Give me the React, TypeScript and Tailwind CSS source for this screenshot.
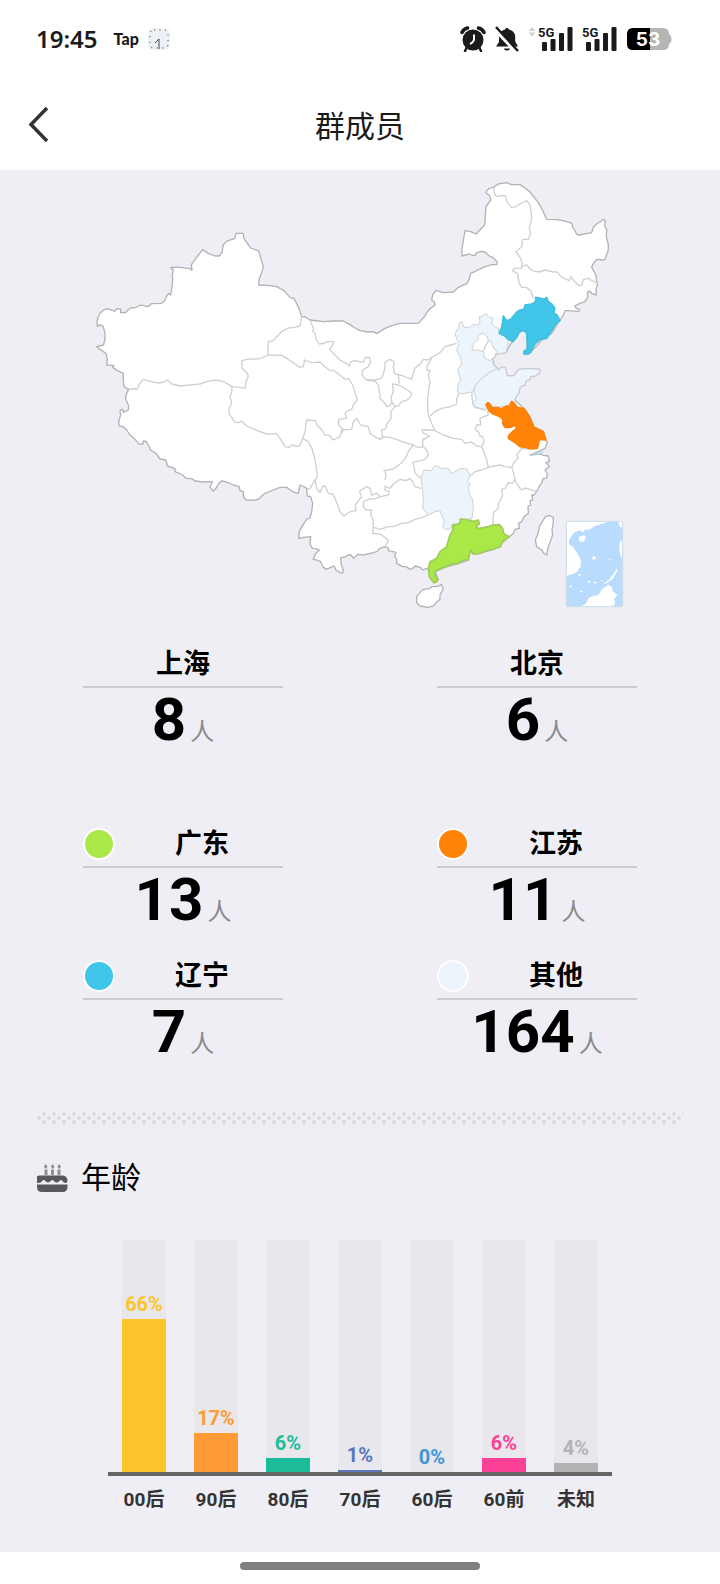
import { ReactNode } from "react";

interface IRegion {
  name: string;
  count: number;
  dot?: string;
}

interface IAge {
  label: string;
  percent: number;
  bar: string;
  text: string;
}

const cities: IRegion[] = [
  { name: "上海", count: 8 },
  { name: "北京", count: 6 },
];

const provinces: IRegion[] = [
  { name: "广东", count: 13, dot: "bg-[#a9e847]" },
  { name: "江苏", count: 11, dot: "bg-[#ff8307]" },
  { name: "辽宁", count: 7, dot: "bg-[#41c5e9]" },
  { name: "其他", count: 164, dot: "bg-[#ebf5fb]" },
];

const ages: IAge[] = [
  { label: "00后", percent: 66, bar: "bg-[#fdc52c]", text: "text-[#fdc52c]" },
  { label: "90后", percent: 17, bar: "bg-[#fe9b35]", text: "text-[#fe9b35]" },
  { label: "80后", percent: 6, bar: "bg-[#1cbc9a]", text: "text-[#1cbc9a]" },
  { label: "70后", percent: 1, bar: "bg-[#5978bb]", text: "text-[#5978bb]" },
  { label: "60后", percent: 0, bar: "bg-[#3f96dc]", text: "text-[#3f96dc]" },
  { label: "60前", percent: 6, bar: "bg-[#fa4197]", text: "text-[#fa4197]" },
  { label: "未知", percent: 4, bar: "bg-[#b3b3b6]", text: "text-[#b3b3b6]" },
];

const mainland =
  "52,470 51,458 53,445 60,430 70,421 80,416 95,420 104,424 110,416 122,417 122,428 136,428 144,420 152,414 170,412 178,406 190,406 200,410 207,408 214,401 244,400 254,392 260,378 266,370 272,375 276,350 278,330 277,314 280,300 272,292 300,292 330,296 336,301 334,284 350,262 368,239 385,250 405,258 418,258 426,248 430,224 440,214 450,210 464,206 468,190 490,190 492,206 502,220 512,234 536,243 544,270 550,290 545,308 538,325 536,345 570,347 590,350 612,362 630,382 642,386 656,412 665,440 676,441 690,450 730,455 760,453 790,453 810,464 825,474 840,482 862,486 880,485 890,491 915,475 935,467 960,460 1015,460 1035,438 1040,428 1050,416 1065,405 1063,396 1055,390 1058,375 1068,361 1090,368 1120,366 1135,352 1162,340 1168,325 1172,310 1190,302 1215,290 1235,284 1250,284 1252,276 1238,262 1228,258 1215,246 1205,244 1190,248 1185,256 1178,256 1168,252 1146,258 1146,235 1152,200 1155,182 1170,184 1188,192 1214,165 1216,135 1218,110 1232,90 1230,78 1218,68 1220,62 1228,55 1240,52 1255,42 1280,38 1295,44 1320,44 1335,54 1350,66 1375,98 1390,125 1400,148 1430,149 1450,152 1476,160 1478,172 1485,182 1490,193 1496,195 1535,188 1540,172 1550,162 1568,150 1572,148 1576,155 1574,168 1580,178 1579,200 1585,225 1585,240 1575,268 1565,270 1552,268 1540,280 1535,292 1548,315 1549,328 1552,345 1548,358 1549,375 1535,370 1528,363 1522,368 1524,380 1515,395 1500,400 1484,408 1490,416 1498,418 1496,425 1470,422 1455,422 1448,440 1438,452 1415,490 1385,510 1350,550 1332,552 1342,530 1340,490 1332,482 1318,486 1298,515 1290,525 1278,548 1250,552 1238,568 1242,585 1252,595 1256,602 1264,592 1275,592 1278,600 1282,618 1302,618 1310,605 1320,598 1345,596 1380,598 1378,610 1360,620 1352,618 1350,628 1338,632 1335,645 1324,648 1318,658 1317,670 1308,678 1305,690 1332,716 1350,740 1362,772 1390,785 1398,810 1402,818 1395,835 1375,845 1350,855 1380,852 1390,856 1405,858 1408,875 1398,878 1408,890 1395,900 1402,912 1400,925 1390,925 1385,940 1378,948 1370,965 1362,975 1355,975 1358,990 1350,992 1352,1005 1344,1008 1345,1030 1332,1040 1325,1055 1316,1060 1318,1075 1305,1078 1300,1090 1288,1100 1265,1120 1240,1138 1200,1150 1180,1152 1170,1142 1165,1170 1130,1182 1100,1190 1065,1205 1075,1230 1062,1238 1048,1220 1045,1195 1038,1196 1030,1200 1020,1192 1005,1188 998,1196 990,1198 978,1190 968,1190 950,1180 950,1168 944,1158 948,1147 925,1142 925,1134 915,1130 900,1135 890,1145 880,1148 850,1155 835,1153 820,1165 812,1154 805,1155 795,1161 782,1163 784,1185 790,1200 788,1209 780,1208 768,1200 762,1188 752,1192 740,1198 730,1192 722,1175 710,1170 700,1168 706,1152 718,1140 708,1136 697,1135 690,1122 692,1100 670,1102 656,1106 658,1085 668,1066 680,1048 690,1044 695,1025 698,1000 692,980 682,978 680,955 668,948 660,945 655,970 640,966 620,952 600,952 580,960 555,970 545,978 535,988 520,991 498,990 490,980 490,965 480,962 478,950 460,945 440,936 425,933 415,942 408,955 400,963 390,952 397,935 370,936 345,933 335,926 318,925 308,915 285,905 285,896 262,888 258,870 240,867 228,850 212,840 205,825 198,814 190,813 188,822 178,823 165,808 150,795 140,780 130,770 118,768 116,755 122,735 120,722 128,718 130,727 145,720 146,708 136,685 140,670 146,658 132,650 130,632 130,610 112,602 98,592 102,586 80,585 82,568 78,550 60,538 50,530 70,525 75,510 75,490 70,470 60,464";

const borders = [
  "146,657 172,657 178,642 190,628 200,632 235,639 252,636 262,630 275,642 300,648 330,645 360,642 380,635 405,630 425,633 440,640 456,650 480,652 495,655 498,636 505,618 500,608 486,595 486,572 500,568 540,566 565,555 564,530 565,515 580,512 590,500 605,485 625,474 645,472 660,468 665,440",
  "456,650 455,668 450,682 455,698 446,720 448,732 465,757 475,758 485,753 500,768 530,781 560,792 590,791 600,805 615,830 628,832 635,824 650,830 660,826 668,805 675,785 680,750 706,752 712,768 722,775 735,795 748,796 760,810 780,800 785,780 815,778 820,755 830,745 842,765 865,770 870,790 888,802 900,808 912,800 932,803 950,808 965,815 1000,825 1015,833 1030,830 1040,840 1045,855 1035,868 998,877 1002,890 1005,910 1023,925",
  "668,805 685,815 697,838 700,850 705,870 710,900 712,920 705,930 690,955 683,958",
  "565,555 605,556 625,568 645,582 660,592 670,590 674,570 695,578 720,576 735,590 752,603 760,600 778,614 795,628 806,626 818,645 824,665 832,688 820,705 815,718 800,724 795,732 800,745 776,748 776,765 790,780 785,790",
  "690,450 696,465 700,475 699,485 705,490 708,506 718,522 730,520 738,516 762,514 758,525 748,538 770,560 782,572 800,580 808,590 812,575 825,572 850,577 856,562 868,562 872,575 865,590 848,600 846,612 852,624 865,632 885,633 895,645 900,675 900,685 915,700 920,710 932,705 935,695 945,710 955,708 965,695 978,692 992,680 995,670 975,655 955,645 937,642 940,665 934,680 935,695",
  "860,630 885,630 905,625 912,605 915,590 915,578 922,572 930,568 943,576 940,592 943,610 970,618 995,628 1000,610 1005,595 1020,582 1030,568 1045,570 1055,562 1068,555 1080,548 1095,530 1112,525 1130,520",
  "955,615 958,640",
  "1055,562 1050,575 1040,590 1040,600 1050,602 1045,615 1050,635 1046,660 1043,690 1043,715 1045,735 1055,760 1065,782 1050,780 1026,780 1028,788 1048,798 1040,804 1028,808 1028,830",
  "1050,738 1065,725 1085,715 1112,710 1130,702 1130,688 1136,670",
  "945,710 932,725 934,740 930,750 922,758 918,775 905,780 908,800 900,808",
  "1065,782 1090,795 1120,805 1145,808 1155,820 1175,816 1190,828 1205,830 1212,815 1208,800 1200,798 1195,785 1185,780 1190,765 1202,765 1200,745 1215,738 1225,735 1222,722",
  "1205,830 1215,855 1220,870 1225,892 1245,888 1260,885 1275,890 1295,892 1300,880 1315,865 1310,855 1325,835 1350,837",
  "1170,918 1185,905 1205,900 1225,892",
  "1295,892 1300,905 1305,930 1298,940 1285,938 1275,955 1265,958 1268,975 1262,990 1255,1000 1255,1015 1243,1025 1240,1035 1238,1065",
  "1305,930 1320,955 1328,960 1335,954 1350,958 1370,965",
  "1000,825 985,845 978,862 965,878 940,897 912,902 918,912 915,930",
  "1023,955 1005,950 998,935 990,925 978,932 970,930 960,928 940,942 930,955 915,948 915,960 928,965 925,975 900,980 890,985 865,988 850,995 850,1010 858,1020 875,1020 872,1035 880,1050 880,1070 878,1090 900,1092 918,1105 925,1112 920,1122 915,1130",
  "880,1072 900,1078 925,1070 940,1070 965,1060 985,1058 1005,1048 1028,1042 1045,1035",
  "705,930 710,955 720,968 728,950 735,948 745,970 758,972 765,985 775,1010 780,1025 792,1038 810,1025 828,1022 826,1005 845,980 838,965 860,950 870,955 875,975 890,970 900,980",
  "1175,668 1178,700 1185,712 1218,720",
  "1360,385 1352,362 1338,352 1325,352 1318,340 1315,325 1312,310 1298,302 1302,295 1325,295 1326,280 1322,265 1308,245 1325,230 1328,208 1345,208 1352,190 1348,175 1352,160 1355,140 1350,105 1340,92 1320,102 1308,110 1295,112 1280,95 1277,78 1265,76 1250,80 1243,72 1242,52",
  "1325,290 1340,284 1348,295 1358,302 1378,306 1395,300 1420,306 1432,306 1445,322 1468,332 1472,320 1480,330 1495,346 1505,346 1510,328 1525,325 1535,332 1552,338",
];

const hebei =
  "1130,508 1125,490 1135,475 1138,460 1145,453 1152,472 1168,472 1180,463 1195,466 1200,455 1198,440 1208,438 1218,430 1225,440 1240,445 1235,462 1245,470 1255,475 1258,492 1275,500 1286,515 1278,548 1250,552 1238,568 1240,585 1252,595 1225,610 1200,630 1185,648 1180,665 1145,672 1132,665 1135,640 1143,630 1133,600 1145,580 1140,560 1130,540 1138,520";
const beijing =
  "1175,540 1182,518 1195,508 1195,494 1210,490 1222,500 1225,512 1215,530 1210,545 1195,540";
const tianjin =
  "1225,515 1232,512 1238,530 1250,545 1244,560 1230,572 1213,562 1210,545 1216,530";
const shandong =
  "1252,595 1256,602 1264,592 1275,592 1278,600 1282,618 1302,618 1310,605 1320,598 1345,596 1380,598 1378,610 1360,620 1352,618 1350,628 1338,632 1335,645 1324,648 1318,658 1317,670 1308,678 1303,694 1280,708 1240,712 1223,702 1218,720 1185,712 1178,700 1190,685 1182,670 1185,648 1200,630 1225,610";
const liaoning =
  "1258,490 1266,468 1270,438 1280,452 1292,448 1312,425 1320,420 1332,418 1335,405 1355,402 1367,395 1367,382 1385,386 1393,388 1400,382 1404,394 1415,402 1424,414 1422,430 1432,436 1440,452 1425,465 1416,480 1400,505 1380,508 1365,522 1352,545 1345,552 1332,552 1332,544 1342,538 1342,515 1340,490 1332,480 1318,486 1310,502 1298,515 1285,508 1275,498";
const jiangsu =
  "1218,704 1224,698 1232,704 1235,713 1250,713 1265,716 1280,708 1288,708 1295,694 1303,700 1312,712 1332,716 1342,730 1350,745 1362,772 1375,778 1390,785 1398,810 1378,808 1372,835 1350,837 1338,832 1320,830 1308,820 1285,805 1287,795 1298,785 1310,775 1306,766 1292,772 1275,772 1268,760 1270,750 1260,740 1240,732 1228,724";
const hunan =
  "1023,925 1028,908 1032,900 1055,902 1062,890 1070,888 1085,895 1105,895 1115,910 1125,905 1140,895 1160,897 1170,918 1162,935 1170,942 1165,955 1170,975 1178,990 1180,1020 1175,1047 1150,1048 1135,1062 1118,1062 1110,1078 1095,1078 1088,1070 1093,1055 1080,1022 1065,1025 1045,1035 1028,1015 1030,980";
const guangdong =
  "1238,1065 1258,1064 1268,1075 1272,1092 1288,1100 1275,1108 1265,1120 1262,1130 1240,1138 1225,1140 1200,1150 1180,1152 1172,1140 1168,1155 1165,1170 1150,1170 1130,1182 1115,1182 1100,1190 1080,1196 1065,1205 1066,1218 1073,1228 1070,1236 1062,1238 1055,1230 1048,1220 1045,1195 1050,1175 1070,1165 1080,1145 1100,1130 1108,1100 1118,1080 1118,1066 1135,1062 1142,1055 1140,1048 1150,1047 1165,1050 1180,1054 1195,1050 1198,1062 1188,1070 1195,1076 1225,1070";
const hainan =
  "1010,1280 1025,1262 1030,1258 1048,1256 1055,1250 1070,1250 1085,1244 1089,1258 1080,1275 1080,1288 1068,1298 1062,1307 1045,1312 1020,1308 1010,1298";
const taiwan =
  "1408,1036 1420,1042 1420,1058 1416,1080 1418,1095 1405,1130 1400,1155 1392,1150 1385,1140 1370,1130 1366,1110 1374,1092 1378,1070 1390,1050 1396,1040";

const ChinaMap = () => {
  return (
    <svg
      viewBox="0 0 1680 1350"
      className="mx-auto block w-7/9"
      role="img"
      aria-label="群成员地区分布"
      strokeLinejoin="round"
    >
      <g fill="#fff" stroke="#b3b3b5" strokeWidth="4">
        <polygon points={mainland} />
        <polygon points={hainan} />
        <polygon points={taiwan} />
      </g>
      <g fill="#ebf5fb" stroke="#cfd1d3" strokeWidth="3">
        <polygon points={hebei} />
        <polygon points={shandong} />
        <polygon points={hunan} />
      </g>
      <g fill="none" stroke="#d0d0d1" strokeWidth="4">
        {borders.map((points) => (
          <polyline key={points} points={points} />
        ))}
      </g>
      <g fill="#fff" stroke="#d0d0d1" strokeWidth="3">
        <polygon points={beijing} />
        <polygon points={tianjin} />
      </g>
      <polygon points={liaoning} fill="#41c5e9" stroke="#41bfe1" strokeWidth="5" />
      <polygon points={jiangsu} fill="#ff8307" stroke="#fb8007" strokeWidth="5" />
      <polygon points={guangdong} fill="#a9e847" stroke="#9fcb5b" strokeWidth="5" />
      <path d="M1350 855l20-7 25-4-12 8z" fill="#b5dcea" />
      <rect x="1459" y="1054" width="169" height="256" fill="#b9dcfe" />
      <g fill="#fff">
        <path d="M1459 1054H1590L1545 1068 1530 1078 1514 1080 1508 1088 1500 1080 1482 1088 1468 1108 1466 1122 1478 1130 1492 1150 1503 1172 1502 1190 1490 1206 1480 1212 1459 1218Z" />
        <path d="M1498 1100l14-4 6 6-6 12-10 2-6-8zM1614 1054h14v20l-8-4zM1618 1120l10-12v60l-6-10-4-18z" />
        <path d="M1500 1310l16-8 10-18 16-6 14-4 10-16 20-14 10 8 2 12 14 10-10 14 4 14-12 8zM1572 1240l18-14 20-30 3 5-15 26-22 14z" />
        <path d="M1534 1164l10-6 5 6-9 5zM1522 1234l8-2 2 4-8 2zM1542 1236l8 0 0 4-8 0zM1495 1212l7 0 0 5-7 0zM1468 1248l7-2 0 6-7 0zM1500 1262l8 0 0 4-8 0zM1585 1170l7-3 2 4zM1560 1232l6-3 2 5z" />
      </g>
      <rect x="1459" y="1054" width="169" height="256" fill="none" stroke="#cbdbe8" strokeWidth="3" />
    </svg>
  );
};

const Signal = () => {
  return (
    <svg viewBox="0 0 36 26" className="h-[26px] w-9" fill="#1b1b1b">
      <text x="0" y="11" fontSize="13" fontWeight="700" fontFamily="Roboto">
        5G
      </text>
      <rect x="4" y="16" width="5" height="9" rx="1" />
      <rect x="12.5" y="13" width="5" height="12" rx="1" />
      <rect x="21" y="7" width="5" height="18" rx="1" />
      <rect x="29.5" y="1" width="5" height="24" rx="1" />
    </svg>
  );
};

const StatusBar = () => {
  return (
    <div className="flex h-[78px] items-center justify-between pr-12 pl-9 text-[#1b1b1b]">
      <div className="flex items-center">
        <span className="font-['Noto_Sans',sans-serif] text-2xl font-semibold">19:45</span>
        <span className="ml-4 font-[Lato,sans-serif] text-base font-black">Tap</span>
        <svg viewBox="0 0 24 24" className="ml-2 size-6">
          <rect x="1" y="1" width="22" height="22" rx="6" fill="#edf1f5" />
          <rect
            x="3"
            y="3"
            width="18"
            height="18"
            rx="4"
            fill="none"
            stroke="#777"
            strokeWidth="1.5"
            strokeDasharray="1 4.5"
          />
          <path d="M12 12v10M12 12l-4 4" stroke="#444" strokeWidth="1" />
        </svg>
      </div>
      <div className="flex items-center">
        <svg viewBox="0 0 26 26" className="size-[26px]">
          <path
            d="M2 6.5Q3.500 3 7.500 2M24 6.500Q22.500 3 18.500 2"
            stroke="#1b1b1b"
            strokeWidth="3.5"
            strokeLinecap="round"
            fill="none"
          />
          <path d="M7 21l-2 4M19 21l2 4" stroke="#1b1b1b" strokeWidth="2.5" strokeLinecap="round" />
          <circle cx="13" cy="14" r="10.5" fill="#1b1b1b" />
          <path d="M14 8.500v5.500q-1 2.500-4 4" stroke="#fff" strokeWidth="2" fill="none" />
        </svg>
        <svg viewBox="0 0 26 26" className="ml-2 size-[26px]">
          <path
            d="M13 2c1 0 1.800.6 2 1.500 4 1 6.200 3.600 6.200 7.500v4.500l2.800 5H2l3-4.500v-5C5 6.900 7.500 4.500 11 3.500c.2-.9 1-1.500 2-1.500zM10 22.500h6c-.4 1.500-1.500 2-3 2s-2.600-.5-3-2z"
            fill="#1b1b1b"
          />
          <path d="M0 2l24 25.500" stroke="#fff" strokeWidth="4" />
          <path d="M2 1L24 25" stroke="#1b1b1b" strokeWidth="2.500" />
        </svg>
        <svg viewBox="0 0 8 26" className="ml-2 h-[26px] w-2" fill="#d0d0d0">
          <path d="M4 1l3.500 4h-7zM4 10.500L.5 6.500h7z" />
        </svg>
        <div className="ml-0.5 flex gap-2">
          <Signal />
          <Signal />
        </div>
        <svg viewBox="0 0 46 24" className="ml-2 h-6 w-[46px]">
          <path d="M24 1h13q6 0 6 6 2.500 1 2.500 5T43 17q0 6-6 6H24z" fill="#b5b5b5" />
          <path d="M24 1H7Q1 1 1 7v10q0 6 6 6h17z" fill="#000" />
          <text
            x="22"
            y="19"
            fontSize="19"
            fontWeight="700"
            fontFamily="Inter"
            textAnchor="middle"
            fill="#fff"
          >
            53
          </text>
        </svg>
      </div>
    </div>
  );
};

const Header = () => {
  return (
    <header className="grid h-[92px] grid-cols-[1fr_auto_1fr] items-center pt-1 pb-1">
      <button type="button" aria-label="返回" className="ml-6 w-8">
        <svg viewBox="0 0 32 40" className="h-10 w-8" fill="none">
          <path d="M23 4L7 20.500 23 37" stroke="#333" strokeWidth="3.500" />
        </svg>
      </button>
      <h1 className="pt-1.5 text-[30px] leading-10 text-[#1a1a1a]">群成员</h1>
    </header>
  );
};

const RegionStat = ({ region }: { region: IRegion }) => {
  return (
    <div>
      <div className="flex h-[42px] items-center border-b-2 border-[#cdccd2] pb-1">
        {region.dot && (
          <span className={`mr-1.5 size-8 rounded-full border-2 border-white ${region.dot}`} />
        )}
        <h2 className="flex-1 text-center text-[27px] leading-9 font-bold">{region.name}</h2>
      </div>
      <p className="mt-0.5 flex items-baseline justify-center gap-1 leading-[60px]">
        <span className="text-[60px] font-bold">{region.count}</span>
        <span className="text-2xl leading-6 text-[#8a898e]">人</span>
      </p>
    </div>
  );
};

const StatGrid = ({ children }: { children: ReactNode }) => {
  return <div className="grid grid-cols-2 gap-x-[154px] gap-y-7 px-[83px]">{children}</div>;
};

const Divider = () => {
  return (
    <svg className="block h-3 w-full" aria-hidden="true">
      <pattern id="dots" width="10" height="12" patternUnits="userSpaceOnUse">
        <g fill="#dad9dd">
          <circle cx="7" cy="2" r="1.9" />
          <circle cx="2" cy="6" r="1.9" />
          <circle cx="7" cy="10" r="1.9" />
        </g>
      </pattern>
      <rect width="100%" height="12" fill="url(#dots)" />
    </svg>
  );
};

const CakeIcon = () => {
  return (
    <svg viewBox="0 0 32 28" className="h-7 w-8" fill="#58585a">
      <g fill="#8f8f91">
        <path d="M8.500 0l2 2.500-1 2H8L7 2.500zM15.500 0l2 2.500-1 2H15l-1-2zM22 0l2 2.500-1 2h-1.500l-1-2z" />
        <path d="M7.500 5.500h3V11h-3zM14 5.500h3V11h-3zM20.500 5.500h3V11h-3z" />
      </g>
      <path d="M6 11.500h19q5.500 0 5.500 5.500 0 2-2 2-2 0-3-2-1.500-2-3 0-1.500 2-3.500 1.500-1.500-.5-2.500-2-1-1-2.500 0-1 2-3 2t-3-2q-1-1-2.500 0-1 2.500-4.500 2.500-3 0-3-2 0-5.500 5-5.500z" />
      <path d="M0 20.500h30.500v2q0 5.500-5 5.500H5q-5 0-5-5.500z" />
    </svg>
  );
};

const AgeChart = () => {
  return (
    <div className="mx-auto w-[504px]">
      <div className="flex h-[236px] justify-around border-b-4 border-[#666]">
        {ages.map((age) => (
          <div key={age.label} className="flex w-11 flex-col justify-end bg-[#e8e7ec]">
            <span className={`mb-[3px] text-center text-xl leading-6 font-bold ${age.text}`}>
              {age.percent}%
            </span>
            <div className={age.bar} style={{ height: `${age.percent}%` }} />
          </div>
        ))}
      </div>
      <div className="mt-3 flex">
        {ages.map((age) => (
          <span
            key={age.label}
            className="flex-1 text-center text-[19px] leading-6 font-bold text-[#333]"
          >
            {age.label}
          </span>
        ))}
      </div>
    </div>
  );
};

const App = () => {
  return (
    <div className="bg-white font-[Roboto,'Noto_Sans_CJK_SC',sans-serif] text-black">
      <StatusBar />
      <Header />
      <main className="bg-[#efeef5] pb-10">
        <ChinaMap />
        <div className="mt-[26px] flex flex-col gap-[76px]">
          <StatGrid>
            {cities.map((city) => (
              <RegionStat key={city.name} region={city} />
            ))}
          </StatGrid>
          <StatGrid>
            {provinces.map((province) => (
              <RegionStat key={province.name} region={province} />
            ))}
          </StatGrid>
        </div>
        <section className="mt-[50px] px-[37px]">
          <Divider />
          <div className="mt-[34px] mb-[42px] flex items-center gap-3">
            <CakeIcon />
            <h2 className="text-[30px] leading-10">年龄</h2>
          </div>
          <AgeChart />
        </section>
      </main>
      <footer className="flex h-8 justify-center pt-2.5">
        <div className="h-2 w-1/3 rounded-full bg-[#808080]" />
      </footer>
    </div>
  );
};

export default App;
